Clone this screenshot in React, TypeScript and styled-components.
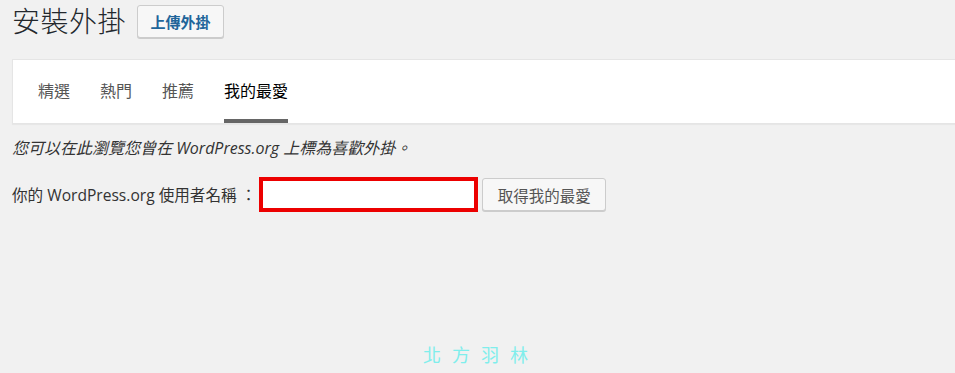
import React from "react";
import styled, { createGlobalStyle } from "styled-components";

const GlobalStyle = createGlobalStyle`
  html, body {
    margin: 0;
    padding: 0;
    background: #f1f1f1;
  }
  body {
    font-family: "Open Sans", "Noto Sans CJK TC", sans-serif;
    color: #444;
    overflow: hidden;
  }
`;

const Page = styled.div`
  position: relative;
  width: 955px;
  height: 373px;
  padding-left: 12px;
  box-sizing: border-box;
  overflow: hidden;
`;

const Header = styled.div`
  display: flex;
  align-items: center;
  gap: 11px;
  height: 34px;
  padding-top: 4px;
`;

const Title = styled.h1`
  margin: 0;
  font-family: "Open Sans", "Noto Sans CJK TC", sans-serif;
  font-size: 28px;
  font-weight: 300;
  color: #23282d;
  line-height: 34px;
  letter-spacing: 0.5px;
`;

const UploadButton = styled.button`
  height: 33px;
  padding: 0 12.5px;
  border: 1px solid #ccc;
  border-radius: 3px;
  background: #f7f7f7;
  box-shadow: 0 1px 0 #ccc;
  color: #21659a;
  font-family: "Noto Sans CJK TC", sans-serif;
  font-size: 15px;
  font-weight: 700;
  cursor: pointer;
`;

const TabPanel = styled.div`
  margin-top: 21px;
  height: 65px;
  background: #fff;
  border: 1px solid #e5e5e5;
  border-right: none;
  box-shadow: 0 1px 1px rgba(0, 0, 0, 0.04);
  display: flex;
  padding-left: 25px;
  gap: 30px;
  box-sizing: border-box;
`;

const Tab = styled.a<{ $active?: boolean }>`
  display: flex;
  align-items: center;
  height: 100%;
  box-sizing: border-box;
  padding-top: 1px;
  border-bottom: 4px solid ${(p) => (p.$active ? "#666" : "transparent")};
  font-family: "Noto Sans CJK TC", sans-serif;
  font-size: 16px;
  color: ${(p) => (p.$active ? "#000" : "#555")};
  text-decoration: none;
  cursor: pointer;
`;

const Note = styled.p`
  margin: 14px 0 0;
  font-size: 16px;
  font-style: italic;
  color: #333;
  line-height: 20px;
`;

const FormRow = styled.div`
  display: flex;
  align-items: center;
  margin-top: 19px;
`;

const Label = styled.label`
  font-size: 15.6px;
  color: #333;
  margin-right: 3px;
`;

const Input = styled.input`
  width: 219px;
  height: 35px;
  box-sizing: border-box;
  border: 4px solid #ec0000;
  background: #fff;
  outline: none;
  padding: 0 6px;
  font-size: 15px;
`;

const SubmitButton = styled.button`
  margin-left: 4px;
  width: 124px;
  height: 33px;
  border: 1px solid #ccc;
  border-radius: 3px;
  background: #f7f7f7;
  box-shadow: 0 1px 0 #ccc;
  color: #555;
  font-family: "Noto Sans CJK TC", sans-serif;
  font-size: 15.5px;
  cursor: pointer;
`;

const Watermark = styled.div`
  position: absolute;
  left: 423px;
  top: 343px;
  font-family: "Noto Sans CJK TC", sans-serif;
  font-size: 18px;
  letter-spacing: 11px;
  color: #80eeec;
  line-height: 22px;
  white-space: nowrap;
`;

const tabs = ["精選", "熱門", "推薦", "我的最愛"];

export default function App() {
  return (
    <>
      <GlobalStyle />
      <Page>
        <Header>
          <Title>安裝外掛</Title>
          <UploadButton>上傳外掛</UploadButton>
        </Header>
        <TabPanel>
          {tabs.map((t) => (
            <Tab key={t} $active={t === "我的最愛"}>
              {t}
            </Tab>
          ))}
        </TabPanel>
        <Note>您可以在此瀏覽您曾在 WordPress.org 上標為喜歡外掛。</Note>
        <FormRow>
          <Label htmlFor="user">你的 WordPress.org 使用者名稱 ：</Label>
          <Input id="user" type="text" />
          <SubmitButton>取得我的最愛</SubmitButton>
        </FormRow>
        <Watermark>北方羽林</Watermark>
      </Page>
    </>
  );
}
